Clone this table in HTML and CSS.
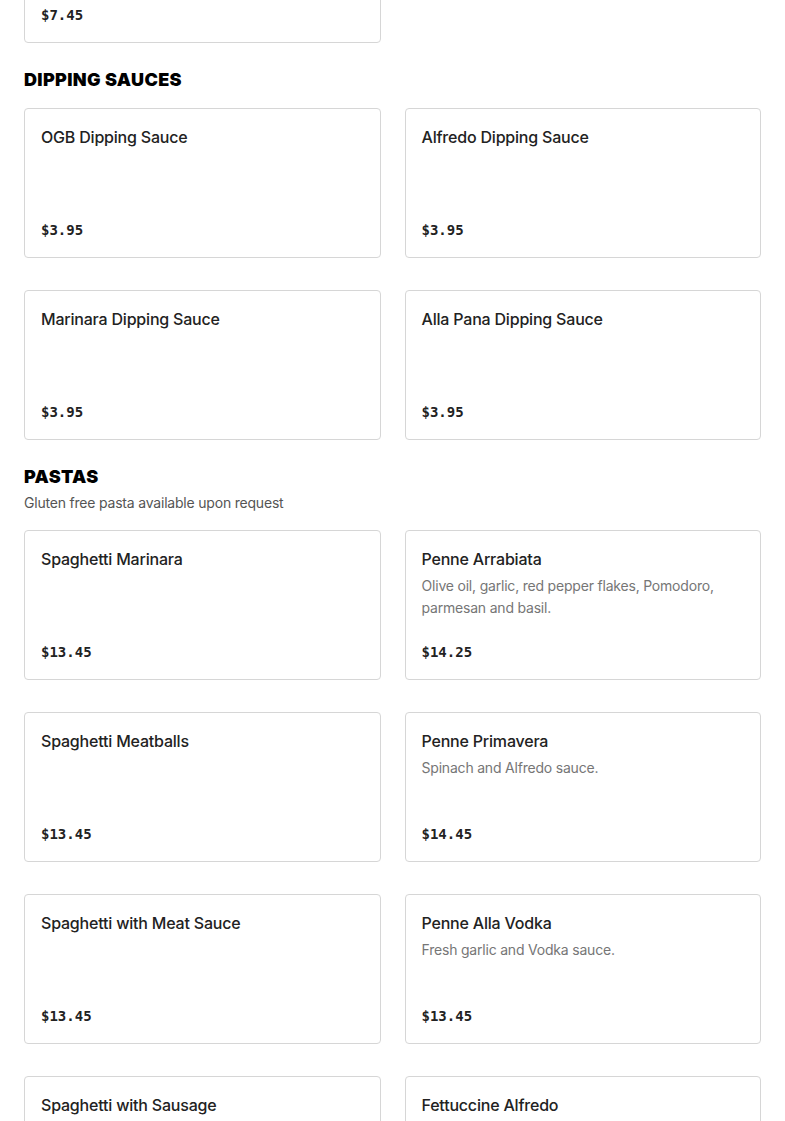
FILE: index.html
```html
<!DOCTYPE html>
<html lang="en">
<head>
<meta charset="utf-8">
<title>Menu</title>
<link rel="stylesheet" href="styles.css">
</head>
<body>
<main class="menu">
  <section class="section section-first">
    <div class="grid">
      <article class="card">
        <h3 class="card-title">Garlic Knots</h3>
        <p class="price">$7.45</p>
      </article>
    </div>
  </section>

  <section class="section">
    <h2 class="section-title">DIPPING SAUCES</h2>
    <div class="grid">
      <article class="card">
        <h3 class="card-title">OGB Dipping Sauce</h3>
        <p class="price">$3.95</p>
      </article>
      <article class="card">
        <h3 class="card-title">Alfredo Dipping Sauce</h3>
        <p class="price">$3.95</p>
      </article>
      <article class="card">
        <h3 class="card-title">Marinara Dipping Sauce</h3>
        <p class="price">$3.95</p>
      </article>
      <article class="card">
        <h3 class="card-title">Alla Pana Dipping Sauce</h3>
        <p class="price">$3.95</p>
      </article>
    </div>
  </section>

  <section class="section">
    <h2 class="section-title">PASTAS</h2>
    <p class="section-sub">Gluten free pasta available upon request</p>
    <div class="grid">
      <article class="card">
        <h3 class="card-title">Spaghetti Marinara</h3>
        <p class="price">$13.45</p>
      </article>
      <article class="card">
        <h3 class="card-title">Penne Arrabiata</h3>
        <p class="card-desc">Olive oil, garlic, red pepper flakes, Pomodoro, parmesan and basil.</p>
        <p class="price">$14.25</p>
      </article>
      <article class="card">
        <h3 class="card-title">Spaghetti Meatballs</h3>
        <p class="price">$13.45</p>
      </article>
      <article class="card">
        <h3 class="card-title">Penne Primavera</h3>
        <p class="card-desc">Spinach and Alfredo sauce.</p>
        <p class="price">$14.45</p>
      </article>
      <article class="card">
        <h3 class="card-title">Spaghetti with Meat Sauce</h3>
        <p class="price">$13.45</p>
      </article>
      <article class="card">
        <h3 class="card-title">Penne Alla Vodka</h3>
        <p class="card-desc">Fresh garlic and Vodka sauce.</p>
        <p class="price">$13.45</p>
      </article>
      <article class="card">
        <h3 class="card-title">Spaghetti with Sausage</h3>
        <p class="price">$13.45</p>
      </article>
      <article class="card">
        <h3 class="card-title">Fettuccine Alfredo</h3>
        <p class="price">$13.45</p>
      </article>
    </div>
  </section>
</main>
</body>
</html>
```
FILE: styles.css
```css
* { box-sizing: border-box; }

html, body {
  margin: 0;
  padding: 0;
  background: #ffffff;
}

body {
  font-family: Inter, "Liberation Sans", sans-serif;
  color: #222222;
  overflow: hidden;
}

.menu {
  padding: 0 24px;
  margin-top: -107px;
}

.section {
  padding-top: 24px;
}

.section-first {
  padding-top: 0;
}

.section-title {
  margin: 0 0 16px;
  font-family: Inter, "Liberation Sans", sans-serif;
  font-weight: 900;
  font-size: 18px;
  line-height: 25px;
  color: #000000;
  letter-spacing: 0.35px;
}

.section-sub {
  margin: -13px 0 16px;
  font-size: 14px;
  line-height: 22px;
  color: #555555;
  letter-spacing: -0.2px;
}

.grid {
  display: grid;
  grid-template-columns: 1fr 1fr;
  column-gap: 24px;
  row-gap: 32px;
}

.card {
  display: flex;
  flex-direction: column;
  height: 150px;
  padding: 16px;
  border: 1px solid #d6d6d6;
  border-radius: 4px;
  background: #ffffff;
}

.card-title {
  margin: 0;
  font-size: 16px;
  line-height: 24px;
  font-weight: 500;
  color: #222222;
  letter-spacing: -0.2px;
}

.card-desc {
  margin: 4px 0 0;
  font-size: 14px;
  line-height: 22px;
  color: #767676;
  letter-spacing: -0.2px;
}

.price {
  margin: auto 0 0;
  font-family: "DejaVu Sans Mono", "Liberation Mono", monospace;
  font-size: 14px;
  line-height: 22px;
  font-weight: 700;
  color: #222222;
}
```
